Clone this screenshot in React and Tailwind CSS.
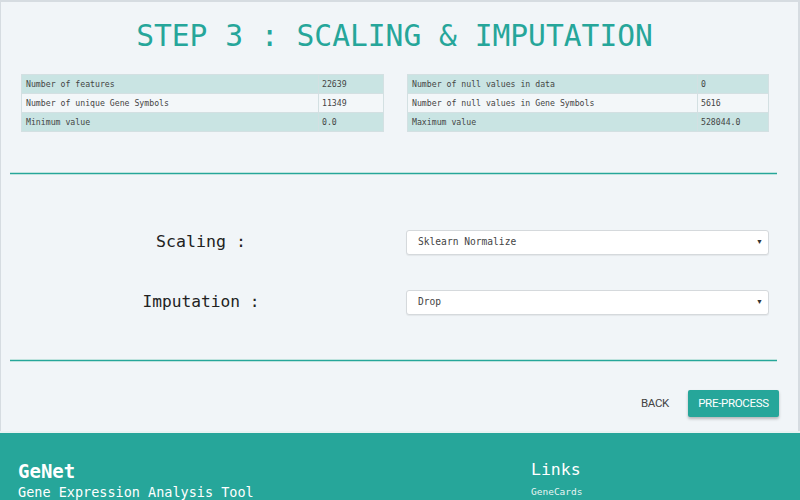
import React from 'react';

const mono = { fontFamily: '"DejaVu Sans Mono", "Liberation Mono", monospace' };

function StatTable({ rows, split }) {
  return (
    <table className="w-full border-collapse text-[8.2px] text-[#444]" style={mono}>
      <tbody>
        {rows.map(([k, v], i) => (
          <tr key={k} className={i % 2 === 0 ? 'bg-[#c9e4e3]' : 'bg-[#f3f7f9]'}>
            <td className="h-[19px] border border-[#d3e0e2] pl-[4px] py-0" style={{ width: split }}>{k}</td>
            <td className="h-[19px] border border-[#d3e0e2] pl-[3px] py-0">{v}</td>
          </tr>
        ))}
      </tbody>
    </table>
  );
}

function Select({ value }) {
  return (
    <div className="flex h-[25px] w-[363px] items-center justify-between rounded-[3px] border border-[#d5d9dc] bg-white pl-[11px] pr-[5px] shadow-[0_1px_1px_rgba(0,0,0,0.06)]">
      <span className="text-[9.6px] text-[#444]" style={mono}>{value}</span>
      <span className="text-[7px] text-[#333]">▼</span>
    </div>
  );
}

export default function App() {
  return (
    <div className="h-[500px] w-[800px] overflow-hidden bg-[#f1f5f8]">
      <div className="border-t-2 border-l border-r-2 border-[#d6dce1] px-[9px] pb-[14px]">
        <h1 className="pt-[14px] pr-[10px] text-center text-[29.6px] leading-[40px] text-[#26a69a]" style={mono}>
          STEP 3 : SCALING &amp; IMPUTATION
        </h1>

        <div className="mt-[18px] flex justify-between pl-[11px] pr-[20px]">
          <div className="w-[363px]">
            <StatTable
              split={297}
              rows={[
                ['Number of features', '22639'],
                ['Number of unique Gene Symbols', '11349'],
                ['Minimum value', '0.0'],
              ]}
            />
          </div>
          <div className="w-[362px]">
            <StatTable
              split={290}
              rows={[
                ['Number of null values in data', '0'],
                ['Number of null values in Gene Symbols', '5616'],
                ['Maximum value', '528044.0'],
              ]}
            />
          </div>
        </div>

        <div className="mt-[40px] mr-[12px] h-[3px] border-y border-[#bfe3de] bg-[#26a69a]" />

        <div className="mt-[55px] flex flex-col gap-[35px] pr-[20px]">
          <div className="flex items-center">
            <div className="w-[382px] text-center text-[16.6px] text-[#222]" style={mono}>Scaling :</div>
            <div className="ml-[14px]"><Select value="Sklearn Normalize" /></div>
          </div>
          <div className="flex items-center">
            <div className="w-[382px] text-center text-[16.2px] text-[#222]" style={mono}>Imputation :</div>
            <div className="ml-[14px]"><Select value="Drop" /></div>
          </div>
        </div>

        <div className="mt-[44px] mr-[12px] h-[3px] border-y border-[#bfe3de] bg-[#26a69a]" />

        <div className="mt-[28px] flex items-center justify-end gap-[19px] pr-[10px]" style={{ fontFamily: 'Roboto, "Noto Sans", sans-serif' }}>
          <button className="text-[11.5px] text-[#444] tracking-[-0.3px]">BACK</button>
          <button className="h-[27px] w-[91px] rounded-[2px] bg-[#26a69a] text-[11.5px] tracking-[-0.3px] text-white shadow-[0_2px_3px_rgba(0,0,0,0.25)]">
            PRE-PROCESS
          </button>
        </div>
      </div>

      <footer className="flex h-[70px] border-t-2 border-[#e8f3f2] bg-[#26a69a] pl-[18px] text-white" style={mono}>
        <div className="w-[513px] pt-[26px]">
          <div className="text-[19px] font-bold leading-[24px]">GeNet</div>
          <div className="text-[13.5px] leading-[18px]">Gene Expression Analysis Tool</div>
        </div>
        <div className="pt-[26px]">
          <div className="text-[16.5px] leading-[22px]">Links</div>
          <div className="mt-[4px] text-[9.5px] text-[#e8f5f3]">GeneCards</div>
        </div>
      </footer>
    </div>
  );
}
